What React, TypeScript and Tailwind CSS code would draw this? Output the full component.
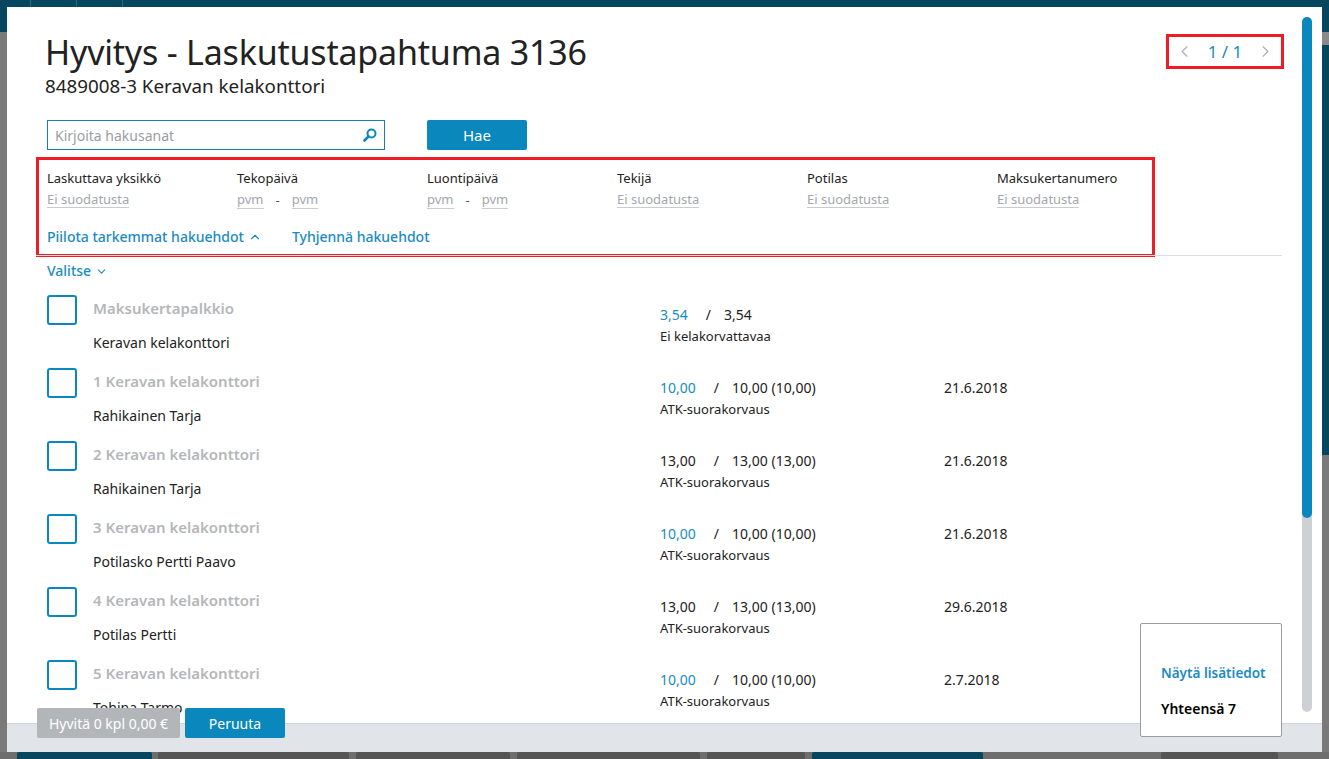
import { ChevronDown, ChevronLeft, ChevronRight, ChevronUp } from "lucide-react";

type Row = {
    title: string;
    name: string;
    paid: string;
    total: string;
    paidBlue: boolean;
    kind: string;
    date: string;
};

const rows: Row[] = [
    { title: "Maksukertapalkkio", name: "Keravan kelakonttori", paid: "3,54", total: "3,54", paidBlue: true, kind: "Ei kelakorvattavaa", date: "" },
    { title: "1 Keravan kelakonttori", name: "Rahikainen Tarja", paid: "10,00", total: "10,00 (10,00)", paidBlue: true, kind: "ATK-suorakorvaus", date: "21.6.2018" },
    { title: "2 Keravan kelakonttori", name: "Rahikainen Tarja", paid: "13,00", total: "13,00 (13,00)", paidBlue: false, kind: "ATK-suorakorvaus", date: "21.6.2018" },
    { title: "3 Keravan kelakonttori", name: "Potilasko Pertti Paavo", paid: "10,00", total: "10,00 (10,00)", paidBlue: true, kind: "ATK-suorakorvaus", date: "21.6.2018" },
    { title: "4 Keravan kelakonttori", name: "Potilas Pertti", paid: "13,00", total: "13,00 (13,00)", paidBlue: false, kind: "ATK-suorakorvaus", date: "29.6.2018" },
    { title: "5 Keravan kelakonttori", name: "Tohina Tarmo", paid: "10,00", total: "10,00 (10,00)", paidBlue: true, kind: "ATK-suorakorvaus", date: "2.7.2018" },
];

const filters = [
    { label: "Laskuttava yksikkö", dates: false },
    { label: "Tekopäivä", dates: true },
    { label: "Luontipäivä", dates: true },
    { label: "Tekijä", dates: false },
    { label: "Potilas", dates: false },
    { label: "Maksukertanumero", dates: false },
];

const SearchIcon = () => (
    <svg width="14" height="14" viewBox="0 0 14 14" fill="none">
        <circle cx="8.5" cy="5.5" r="4" stroke="#0a88bd" strokeWidth="2" />
        <path d="M5.6 8.4 L1.5 12.5" stroke="#0a88bd" strokeWidth="2.6" strokeLinecap="round" />
    </svg>
);

const Underlined = ({ text }: { text: string }) => (
    <span className="border-b border-[#c8ccd0] leading-[16px] text-[#a3a7ab]">{text}</span>
);

const ListRow = ({ row }: { row: Row }) => (
    <div className="flex h-[73px]">
        <div className="flex w-[613px] shrink-0">
            <div className="h-[30px] w-[30px] shrink-0 rounded-[3px] border-2 border-[#0a88bd]" />
            <div className="ml-[16px] flex flex-col">
                <div className="mt-[2px] text-[15px] font-semibold leading-[22px] text-[#b4b7ba]">{row.title}</div>
                <div className="mt-[14px] text-[14px] leading-[20px] text-[#222]">{row.name}</div>
            </div>
        </div>
        <div className="flex w-[284px] shrink-0 flex-col pt-[10px]">
            <div className="flex text-[14px] leading-[20px] text-[#222]">
                <span className={row.paidBlue ? "text-[#1a8bc4]" : ""}>{row.paid}</span>
                <span className="ml-[18px] mr-[13px]">/</span>
                <span>{row.total}</span>
            </div>
            <div className="mt-[2px] text-[13px] leading-[18px] text-[#222]">{row.kind}</div>
        </div>
        <div className="pt-[10px] text-[14px] leading-[20px] text-[#222]">{row.date}</div>
    </div>
);

const App = () => {
    return (
        <div className="relative h-[759px] w-[1329px] overflow-hidden bg-[#7a7a7a] p-[7px] font-['Noto_Sans',sans-serif]">
            {/* app behind the dialog */}
            <div className="absolute inset-x-0 top-0 flex h-[32px] bg-[#06465f]">
                <div className="h-full w-[31px] border-r border-[#2f6a80]" />
                <div className="h-full w-[46px] border-r border-[#2f6a80]" />
                <div className="h-full w-[46px] border-r border-[#2f6a80]" />
            </div>
            <div className="absolute right-0 top-[45px] h-[410px] w-[7px] bg-[#06465f]" />
            <div className="absolute right-0 top-[32px] h-[13px] w-[7px] bg-[#8a8a8a]" />
            <div className="absolute inset-x-0 bottom-0 flex h-[7px] items-end bg-[#6e6e6e]">
                <div className="ml-[17px] h-[7px] w-[135px] rounded-t-[2px] bg-[#06465f]" />
                <div className="ml-[6px] h-[7px] w-[191px] rounded-t-[2px] bg-[#555]" />
                <div className="ml-[7px] h-[7px] w-[154px] rounded-t-[2px] bg-[#555]" />
                <div className="ml-[7px] h-[7px] w-[183px] rounded-t-[2px] bg-[#555]" />
                <div className="ml-[7px] h-[7px] w-[98px] rounded-t-[2px] bg-[#555]" />
                <div className="ml-[7px] h-[7px] w-[171px] rounded-t-[2px] bg-[#06465f]" />
                <div className="ml-[178px] h-[7px] w-[117px] rounded-t-[2px] bg-[#555]" />
            </div>

            {/* dialog */}
            <div className="relative z-10 flex h-full flex-col bg-white">
                <div className="relative flex-1 overflow-hidden">
                    <div className="pl-[38px] pr-[38px]">
                        <div className="flex items-start justify-between">
                            <div className="pt-[24px]">
                                <h1 className="text-[34px] leading-[42px] tracking-[-0.2px] text-[#222]">Hyvitys - Laskutustapahtuma 3136</h1>
                                <div className="mt-[1px] text-[18.8px] leading-[24px] text-[#222]">8489008-3 Keravan kelakonttori</div>
                            </div>
                            <div className="mt-[27px] flex h-[35px] w-[118px] items-center justify-between border-[3px] border-[#ee1c25] px-[6px]">
                                <ChevronLeft size={19} strokeWidth={1.4} className="text-[#a9adb1]" />
                                <span className="text-[17px] text-[#1a8bc4]">1 / 1</span>
                                <ChevronRight size={19} strokeWidth={1.4} className="text-[#a9adb1]" />
                            </div>
                        </div>

                        <div className="mt-[22px] flex items-center">
                            <div className="ml-[2px] flex h-[30px] w-[338px] items-center justify-between border border-[#1a7fb0] px-[7px]">
                                <span className="text-[14px] text-[#9a9ea2]">Kirjoita hakusanat</span>
                                <SearchIcon />
                            </div>
                            <button className="ml-[42px] h-[30px] w-[100px] rounded-[2px] bg-[#0a88bd] text-[15px] text-white">Hae</button>
                        </div>

                        <div className="ml-[-9px] mt-[7px] w-[1119px] border-[3px] border-[#ee1c25] pl-[8px]">
                            <div className="mt-[9px] flex">
                                {filters.map((f) => (
                                    <div key={f.label} className="w-[190px] shrink-0 text-[13px]">
                                        <div className="leading-[18px] text-[#222]">{f.label}</div>
                                        <div className="mt-[4px] flex leading-[18px]">
                                            {f.dates ? (
                                                <>
                                                    <Underlined text="pvm" />
                                                    <span className="mx-[12px] text-[#555]">-</span>
                                                    <Underlined text="pvm" />
                                                </>
                                            ) : (
                                                <Underlined text="Ei suodatusta" />
                                            )}
                                        </div>
                                    </div>
                                ))}
                            </div>
                            <div className="mb-[7px] mt-[18px] flex items-center text-[14px] font-medium leading-[20px] text-[#1a8bc4]">
                                <span>Piilota tarkemmat hakuehdot</span>
                                <ChevronUp size={14} strokeWidth={2} className="ml-[4px]" />
                                <span className="ml-[30px]">Tyhjennä hakuehdot</span>
                            </div>
                        </div>
                        <div className="ml-[-9px] mt-[-2px] h-px w-[1246px] bg-[#dcdfe2]" />

                        <div className="ml-[2px] mt-[5px] flex items-center text-[14px] font-medium leading-[20px] text-[#1a8bc4]">
                            <span>Valitse</span>
                            <ChevronDown size={13} strokeWidth={2} className="ml-[4px]" />
                        </div>

                        <div className="ml-[2px] mt-[14px] flex flex-col">
                            {rows.map((r) => (
                                <ListRow key={r.title} row={r} />
                            ))}
                        </div>
                    </div>

                    {/* scrollbar */}
                    <div className="absolute right-[10px] top-[10px] h-[695px] w-[10px] rounded-full bg-[#cdd1d5]">
                        <div className="h-[501px] w-full rounded-full bg-[#0a88bd]" />
                    </div>
                </div>

                <div className="h-[29px] shrink-0 border-t border-[#cfd3d7] bg-[#e1e4e8]" />

                <div className="absolute bottom-[14px] left-[30px] flex gap-[5px]">
                    <button className="h-[30px] w-[143px] rounded-[2px] bg-[#b3b6b9] text-[14px] text-white">Hyvitä 0 kpl 0,00 €</button>
                    <button className="h-[30px] w-[100px] rounded-[2px] bg-[#0a88bd] text-[14px] text-white">Peruuta</button>
                </div>

                <div className="absolute bottom-[15px] right-[40px] flex h-[114px] w-[142px] flex-col justify-center rounded-[2px] border border-[#9a9ea2] bg-white pl-[20px]">
                    <div className="mt-[22px] text-[13.5px] font-semibold leading-[20px] text-[#1a8bc4]">Näytä lisätiedot</div>
                    <div className="mt-[16px] text-[14px] font-semibold leading-[20px] text-black">Yhteensä 7</div>
                </div>
            </div>
        </div>
    );
};

export default App;
